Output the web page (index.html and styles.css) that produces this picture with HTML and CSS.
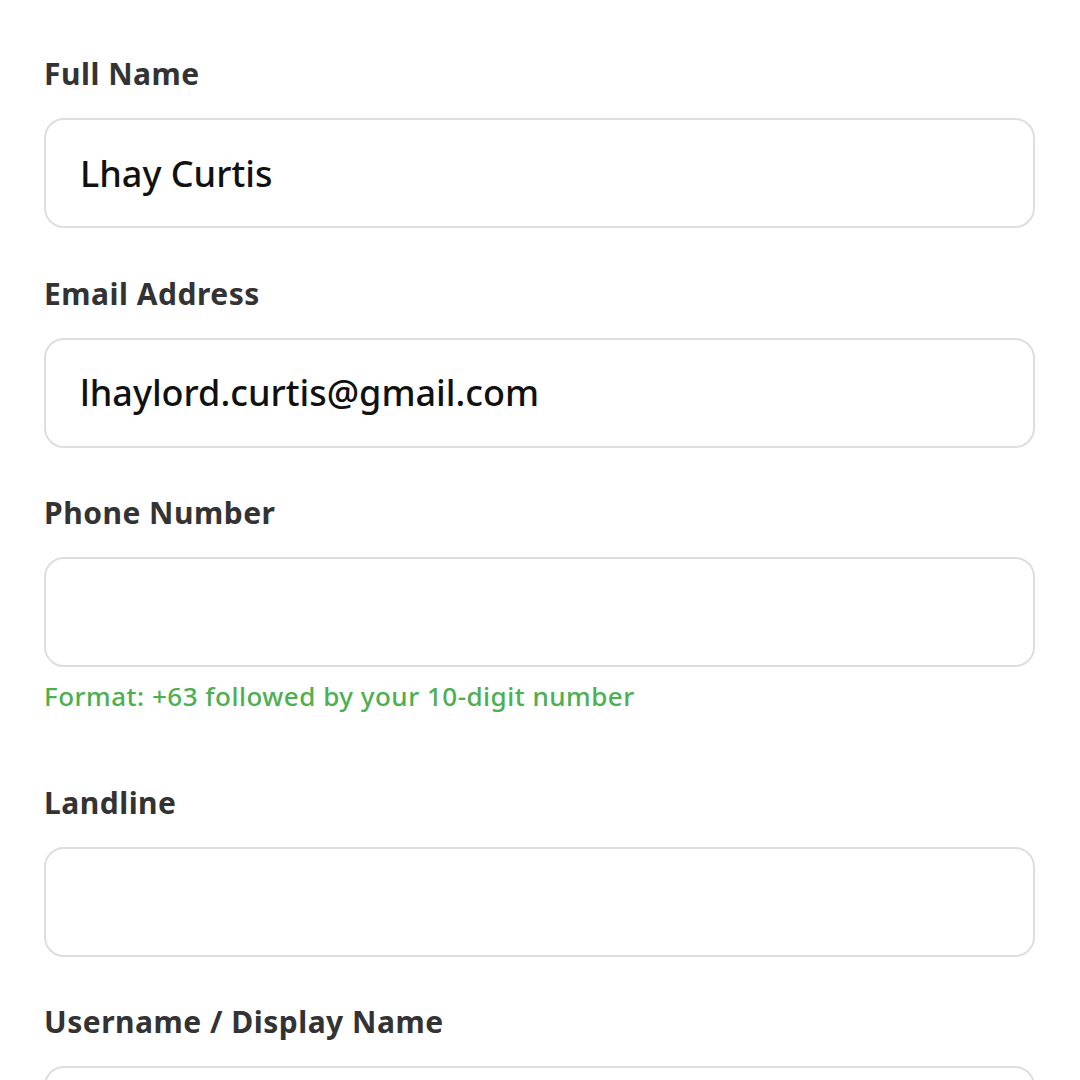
FILE: index.html
```html
<!DOCTYPE html>
<html lang="en">
<head>
<meta charset="utf-8">
<title>Profile form</title>
<link rel="stylesheet" href="styles.css">
</head>
<body>
<form class="form">
  <div class="field">
    <label class="label" for="fullname">Full Name</label>
    <input class="input" id="fullname" type="text" value="Lhay Curtis">
  </div>
  <div class="field">
    <label class="label" for="email">Email Address</label>
    <input class="input" id="email" type="email" value="lhaylord.curtis@gmail.com">
  </div>
  <div class="field field-help">
    <label class="label" for="phone">Phone Number</label>
    <input class="input" id="phone" type="tel" value="">
    <p class="help">Format: +63 followed by your 10-digit number</p>
  </div>
  <div class="field">
    <label class="label" for="landline">Landline</label>
    <input class="input" id="landline" type="tel" value="">
  </div>
  <div class="field">
    <label class="label" for="username">Username / Display Name</label>
    <input class="input" id="username" type="text" value="">
  </div>
</form>
</body>
</html>
```
FILE: styles.css
```css
html, body {
  margin: 0;
  padding: 0;
  background: #ffffff;
  height: 1080px;
  overflow: hidden;
}
body {
  font-family: "Noto Sans", "Liberation Sans", sans-serif;
}
.form {
  display: flex;
  flex-direction: column;
  gap: 47.5px;
  padding: 56px 45px 0 44px;
}
.field {
  display: flex;
  flex-direction: column;
}
.label {
  font-size: 30px;
  line-height: 36px;
  font-weight: 700;
  letter-spacing: 0.5px;
  color: #333333;
  margin-bottom: 26px;
}
.input {
  box-sizing: border-box;
  height: 110px;
  width: 100%;
  border: 2px solid #dedede;
  border-radius: 20px;
  padding: 0 34px;
  font-family: inherit;
  font-size: 36px;
  font-weight: 500;
  color: #111111;
  background: #ffffff;
  outline: none;
}
.help {
  margin: 13px 0 25px;
  font-size: 26px;
  line-height: 32px;
  letter-spacing: 0.5px;
  color: #4caf50;
  font-weight: 500;
}
```
